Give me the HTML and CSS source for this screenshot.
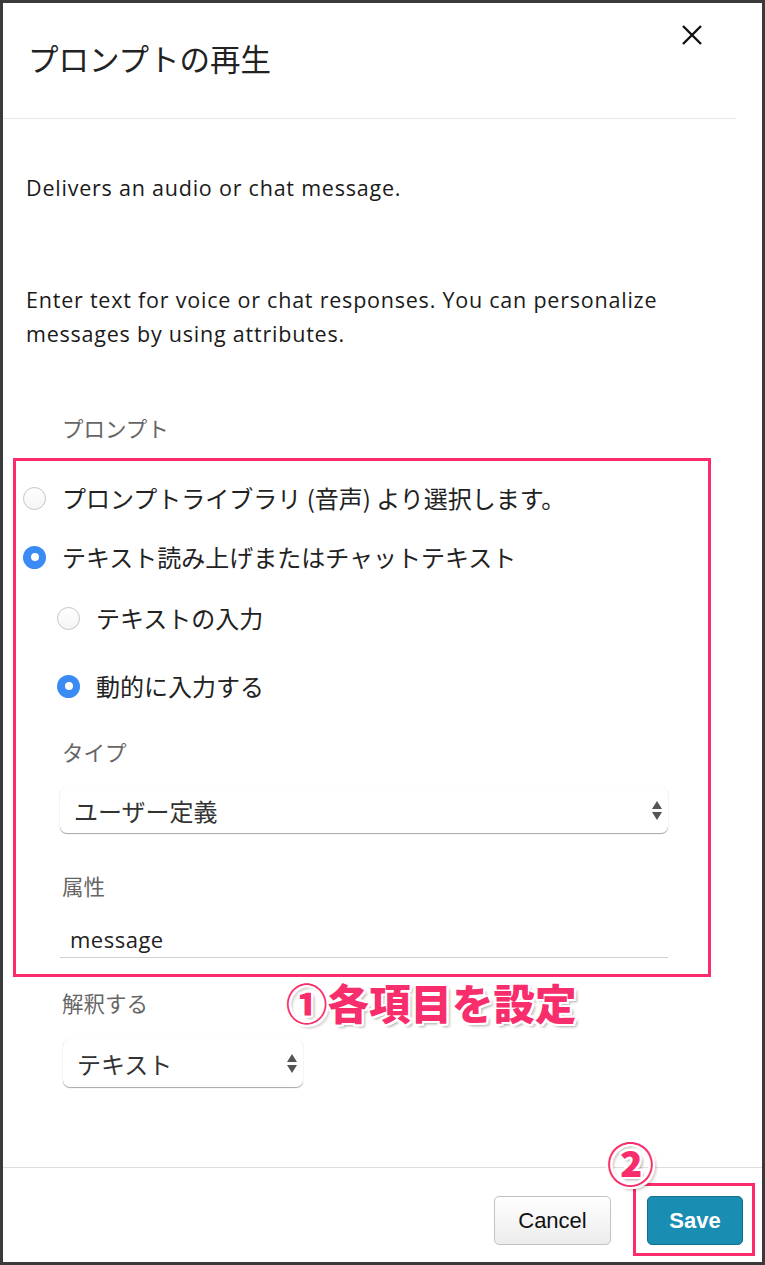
FILE: index.html
```html
<!DOCTYPE html>
<html lang="ja">
<head>
<meta charset="utf-8">
<title>プロンプトの再生</title>
<link rel="stylesheet" href="styles.css">
</head>
<body>
<div class="frame">
  <header class="header">
    <h1 class="title">プロンプトの再生</h1>
    <button class="close" aria-label="close">
      <svg width="22" height="22" viewBox="0 0 22 22"><path d="M2 2L20 20M20 2L2 20" stroke="#111" stroke-width="2.4" fill="none"/></svg>
    </button>
  </header>
  <div class="divider"></div>
  <main class="content">
    <p class="desc">Delivers an audio or chat message.</p>
    <p class="enter">Enter text for voice or chat responses. You can personalize messages by using attributes.</p>
    <div class="label first">プロンプト</div>
    <div class="group">
      <div class="row r1"><span class="radio"></span><span class="rtext">プロンプトライブラリ (音声) より選択します。</span></div>
      <div class="row r2"><span class="radio on"></span><span class="rtext">テキスト読み上げまたはチャットテキスト</span></div>
      <div class="row r3 sub"><span class="radio"></span><span class="rtext">テキストの入力</span></div>
      <div class="row r4 sub"><span class="radio on"></span><span class="rtext">動的に入力する</span></div>
      <div class="label inner l-type">タイプ</div>
      <div class="select wide"><span>ユーザー定義</span><span class="arrows"><i class="up"></i><i class="down"></i></span></div>
      <div class="label inner l-attr">属性</div>
      <div class="input">message</div>
      <div class="note">①各項目を設定</div>
    </div>
    <div class="label l-interp">解釈する</div>
    <div class="select narrow"><span>テキスト</span><span class="arrows"><i class="up"></i><i class="down"></i></span></div>
  </main>
  <footer class="footer">
    <button class="btn cancel">Cancel</button>
    <div class="save-wrap">
      <button class="btn save">Save</button>
      <span class="save-box"></span>
      <span class="note2">②</span>
    </div>
  </footer>
</div>
</body>
</html>
```

FILE: styles.css
```css
* { box-sizing: border-box; }
html, body { margin: 0; padding: 0; background: #fff; }
body {
  font-family: "Open Sans", "Noto Sans CJK JP", sans-serif;
  color: #222;
}
.frame {
  width: 765px;
  height: 1265px;
  border: 3px solid #3a3a3a;
  display: flex;
  flex-direction: column;
  background: #fff;
}
.header {
  height: 115px;
  display: flex;
  justify-content: space-between;
  align-items: flex-start;
  padding: 35px 59px 0 25px;
}
.title {
  margin: 0;
  font-family: "Noto Sans CJK JP", sans-serif;
  font-weight: 400;
  font-size: 30.5px;
  line-height: 40px;
  color: #222;
}
.close {
  border: 0;
  background: none;
  padding: 0;
  margin-top: -14px;
  width: 22px;
  height: 22px;
  display: flex;
}
.divider {
  height: 1px;
  background: #e8e8e8;
  margin-right: 26px;
}
.content {
  flex: 1;
  padding-left: 23px;
}
.desc, .enter {
  margin: 0;
  font-size: 21.5px;
  letter-spacing: 0.78px;
  line-height: 34px;
  color: #1a1a1a;
}
.desc { margin-top: 52px; }
.enter { margin-top: 78px; width: 660px; }
.label {
  font-family: "Noto Sans CJK JP", sans-serif;
  font-size: 21.5px;
  color: #666;
  line-height: 34px;
  margin-left: 36px;
}
.label.first { margin-top: 60px; }
.group {
  position: relative;
  margin-top: 13px;
  margin-left: -13px;
  width: 698px;
  border: 3px solid #fd2b6b;
  padding: 7px 0 16px 0;
}
.row {
  display: flex;
  align-items: center;
  font-family: "Noto Sans CJK JP", sans-serif;
  font-size: 24px;
  color: #222;
  padding-left: 7px;
}
.r1 { height: 60px; }
.r2 { height: 58px; }
.r3 { height: 64px; }
.r4 { height: 72px; }
.row.sub { padding-left: 41px; }
.radio {
  width: 23px;
  height: 23px;
  border-radius: 50%;
  border: 1px solid #c4c4c4;
  background: linear-gradient(#fff, #f4f4f4);
  margin-right: 16px;
  flex: none;
  display: flex;
  align-items: center;
  justify-content: center;
}
.radio.on {
  border: 0;
  background: #3a8bf4;
}
.radio.on::after {
  content: "";
  width: 8px;
  height: 8px;
  border-radius: 50%;
  background: #fff;
}
.rtext { line-height: 34px; }
.label.inner {
  margin-left: 46px;
  line-height: 60px;
}
.label.l-attr { margin-top: 33px; line-height: 40px; }
.select {
  display: flex;
  align-items: center;
  justify-content: space-between;
  font-family: "Noto Sans CJK JP", sans-serif;
  font-size: 24px;
  color: #333;
  background: #fff;
  border-radius: 7px;
  box-shadow: 0 1px 1px rgba(0,0,0,0.35), 0 0 1px rgba(0,0,0,0.08);
  padding: 0 6px 0 14px;
}
.select.wide {
  margin-left: 44px;
  margin-top: 5px;
  width: 608px;
  height: 46px;
}
.select.narrow {
  margin-left: 37px;
  margin-top: 16px;
  width: 240px;
  height: 48px;
}
.arrows {
  display: flex;
  flex-direction: column;
  gap: 3px;
  align-items: center;
}
.arrows i {
  width: 0;
  height: 0;
  border-left: 5.5px solid transparent;
  border-right: 5.5px solid transparent;
}
.arrows .up { border-bottom: 8px solid #555; }
.arrows .down { border-top: 8px solid #555; }
.input {
  margin-left: 44px;
  margin-top: 16px;
  width: 608px;
  height: 36px;
  border-bottom: 1px solid #d0d0d0;
  padding-left: 10px;
  font-size: 22px;
  letter-spacing: 0.5px;
  line-height: 34px;
  color: #222;
  font-family: "Open Sans", sans-serif;
}
.label.l-interp {
  margin-top: 6px;
  margin-left: 36px;
  line-height: 40px;
}
.note {
  position: absolute;
  left: 270px;
  top: calc(100% + 3px);
  font-family: "Noto Sans CJK JP", sans-serif;
  font-weight: 900;
  font-size: 41.5px;
  line-height: 50px;
  color: #f72d6c;
  text-shadow:
    2px 0 0 #fff, -2px 0 0 #fff, 0 2px 0 #fff, 0 -2px 0 #fff,
    2px 2px 0 #fff, -2px -2px 0 #fff, 2px -2px 0 #fff, -2px 2px 0 #fff,
    3px 3px 3px rgba(0,0,0,0.35);
  white-space: nowrap;
}
.footer {
  height: 95px;
  border-top: 1px solid #dedede;
  display: flex;
  justify-content: flex-end;
  align-items: flex-start;
  gap: 36px;
  padding: 28px 19px 0 0;
}
.btn {
  height: 49px;
  border-radius: 5px;
  font-family: "Liberation Sans", Arial, sans-serif;
  font-size: 22px;
  padding: 0;
}
.cancel {
  width: 117px;
  border: 1px solid #c2c2c2;
  background: linear-gradient(#fff, #ececec);
  color: #111;
}
.save-wrap {
  position: relative;
  width: 96px;
  height: 49px;
}
.save {
  width: 96px;
  border: 1px solid #0f6f8d;
  background: #1a8db2;
  color: #fff;
  font-weight: 700;
}
.save-box {
  position: absolute;
  left: -14px;
  right: -12px;
  top: -13px;
  bottom: -11px;
  border: 3px solid #fd2b6b;
  box-shadow: 0 0 0 1px #fff;
}
.note2 {
  position: absolute;
  left: -40px;
  top: -62px;
  font-family: "Noto Sans CJK JP", sans-serif;
  font-weight: 900;
  font-size: 47px;
  line-height: 56px;
  color: #f72d6c;
  text-shadow:
    2px 0 0 #fff, -2px 0 0 #fff, 0 2px 0 #fff, 0 -2px 0 #fff,
    2px 2px 0 #fff, -2px -2px 0 #fff, 2px -2px 0 #fff, -2px 2px 0 #fff,
    3px 3px 3px rgba(0,0,0,0.35);
}
```
